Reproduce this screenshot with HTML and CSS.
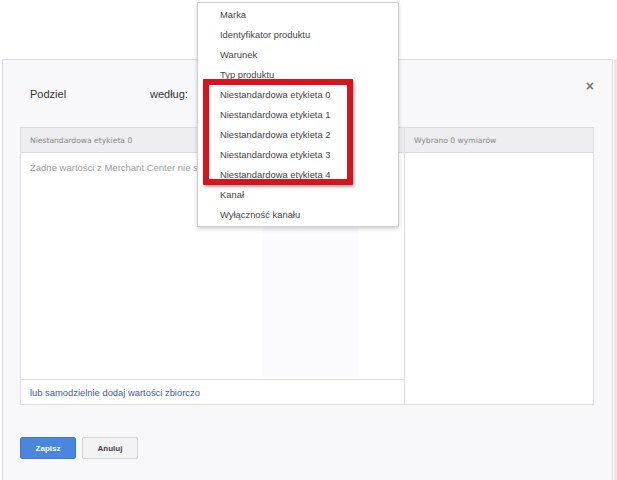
FILE: index.html
```html
<!DOCTYPE html>
<html lang="pl">
<head>
<meta charset="utf-8">
<link rel="stylesheet" href="styles.css">
</head>
<body>
<div class="top-space"></div>
<div class="dialog">
  <div class="dlg-head">
    <span class="title">Podziel</span>
    <span class="by">według:</span>
    <span class="close">×</span>
  </div>
  <div class="panels">
    <div class="panel left">
      <div class="panel-head">Niestandardowa etykieta 0</div>
      <div class="panel-body">
        <div class="empty">Żadne wartości z Merchant Center nie s</div>
        <div class="ghost-col"></div>
      </div>
      <div class="panel-foot">lub samodzielnie dodaj wartości zbiorczo</div>
    </div>
    <div class="panel right">
      <div class="panel-head">Wybrano 0 wymiarów</div>
      <div class="panel-body"></div>
    </div>
  </div>
  <div class="buttons">
    <button class="btn primary">Zapisz</button>
    <button class="btn">Anuluj</button>
  </div>
</div>

<div class="dropdown">
  <div class="item">Marka</div>
  <div class="item">Identyfikator produktu</div>
  <div class="item">Warunek</div>
  <div class="item">Typ produktu</div>
  <div class="item">Niestandardowa etykieta 0</div>
  <div class="item">Niestandardowa etykieta 1</div>
  <div class="item">Niestandardowa etykieta 2</div>
  <div class="item">Niestandardowa etykieta 3</div>
  <div class="item">Niestandardowa etykieta 4</div>
  <div class="item">Kanał</div>
  <div class="item">Wyłączność kanału</div>
</div>
<div class="highlight"></div>
</body>
</html>
```
FILE: styles.css
```css
html, body {
  margin: 0;
  padding: 0;
  background: #ffffff;
  font-family: "Liberation Sans", Arial, sans-serif;
  color: #333;
  overflow: hidden;
}
body {
  width: 617px;
  height: 480px;
  position: relative;
  background: linear-gradient(to right, #ffffff 614px, #e9e9ea 614px);
}
.top-space {
  height: 59px;
  background: #fff;
}
.dialog {
  margin-left: 2px;
  width: 611px;
  height: 421px;
  box-sizing: border-box;
  background: #f8f7f9;
  border-top: 1px solid #dedde0;
  border-left: 1px solid #dedde0;
  border-right: 1px solid #dedde0;
  padding: 0 19px 0 17px;
}
.dlg-head {
  height: 67px;
  display: flex;
  align-items: center;
}
.title {
  font-size: 11px;
  color: #333;
  margin-left: 10px;
  width: 120px;
}
.by {
  font-size: 11px;
  color: #333;
}
.close {
  margin-left: auto;
  align-self: flex-start;
  margin-top: 18px;
  font-size: 14px;
  font-weight: bold;
  color: #777;
  line-height: 16px;
  transform: translateX(1px);
}
.panels {
  display: flex;
  width: 574px;
  height: 278px;
  box-sizing: border-box;
  border: 1px solid #dcdcdc;
  background: #fff;
}
.panel {
  display: flex;
  flex-direction: column;
}
.panel.left {
  width: 384px;
  border-right: 1px solid #dcdcdc;
  box-sizing: border-box;
}
.panel.right {
  flex: 1;
}
.panel-head {
  height: 24px;
  flex: none;
  border-bottom: 1px solid #dcdcdc;
  background: #eeedf0;
  font-family: "DejaVu Sans", Verdana, sans-serif;
  font-size: 7.6px;
  color: #888;
  display: flex;
  align-items: center;
  padding-left: 9px;
}
.panel-body {
  flex: 1;
  background: #fff;
  display: flex;
  flex-direction: column;
}
.empty {
  font-size: 9.5px;
  color: #9a9a9a;
  padding: 9px 0 0 9px;
}
.ghost-col {
  margin: 50px 0 2px 241px;
  width: 96px;
  flex: 1;
  background: #fbfafc;
}
.panel-foot {
  height: 24px;
  flex: none;
  border-top: 1px solid #dcdcdc;
  font-size: 9.4px;
  color: #3e5c9a;
  display: flex;
  align-items: center;
  padding-left: 9px;
}
.buttons {
  display: flex;
  gap: 6px;
  margin-top: 32px;
}
.btn {
  width: 56px;
  height: 22px;
  box-sizing: border-box;
  border: 1px solid #d4d4d4;
  border-radius: 2px;
  background: #f3f3f3;
  color: #444;
  font-family: "Liberation Sans", Arial, sans-serif;
  font-size: 8px;
  font-weight: bold;
  padding: 0;
}
.btn.primary {
  background: #4a86e0;
  border-color: #3f79d2;
  color: #fff;
}
.dropdown {
  position: absolute;
  left: 197px;
  top: 2px;
  width: 202px;
  height: 225px;
  box-sizing: border-box;
  background: #fff;
  border: 1px solid #cfcfcf;
  box-shadow: 0 2px 4px rgba(0,0,0,0.18);
  padding-top: 2px;
}
.item {
  height: 20px;
  line-height: 20px;
  padding-left: 22px;
  font-size: 9.4px;
  color: #444;
  white-space: nowrap;
}
.highlight {
  position: absolute;
  left: 203px;
  top: 79px;
  width: 150px;
  height: 106px;
  box-sizing: border-box;
  border: 6px solid #d8131b;
  border-radius: 1px;
  box-shadow: 1px 2px 3px rgba(0,0,0,0.35);
}
```
